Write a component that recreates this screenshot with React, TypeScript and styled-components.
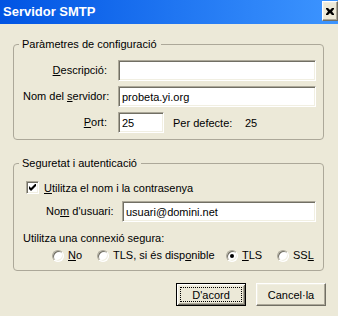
import React from "react";
import styled, { createGlobalStyle } from "styled-components";

const GlobalStyle = createGlobalStyle`
  html, body { margin: 0; padding: 0; background: #ECE9D8; }
  body {
    font-family: "Liberation Sans", Arial, sans-serif;
    font-size: 11px;
    color: #000;
  }
  * { box-sizing: border-box; }
`;

const Window = styled.div`
  width: 338px;
  height: 316px;
  display: flex;
  flex-direction: column;
  background: #ECE9D8;
  overflow: hidden;
`;

const TitleBar = styled.div`
  height: 24px;
  flex: none;
  display: flex;
  align-items: flex-start;
  justify-content: space-between;
  background: linear-gradient(to right, #0054E3, #3D95FF);
`;

const Title = styled.div`
  color: #fff;
  font-weight: bold;
  font-size: 13px;
  line-height: 24px;
  padding-left: 3px;
`;

const CloseButton = styled.div`
  width: 16px;
  height: 20px;
  margin-top: 1px;
  display: flex;
  align-items: center;
  justify-content: center;
  background: #ECE9D8;
  border: 1px solid;
  border-color: #fff #716F64 #716F64 #fff;
  box-shadow: inset -1px -1px #ACA899, inset 1px 1px #F1EFE2;
`;

const Body = styled.div`
  flex: 1;
  display: flex;
  flex-direction: column;
  padding: 20px 14px 0 13px;
`;

const Group = styled.div<{ $mt?: number; $pt: number; $pb: number }>`
  position: relative;
  margin-top: ${(p) => p.$mt ?? 0}px;
  border: 1px solid #ACA899;
  border-radius: 4px;
  padding: ${(p) => p.$pt}px 7px ${(p) => p.$pb}px 9px;
`;

const Legend = styled.span`
  position: absolute;
  top: -7px;
  left: 5px;
  padding: 0 4px 0 3px;
  line-height: 13px;
  background: #ECE9D8;
`;

const FieldGrid = styled.div`
  display: grid;
  grid-template-columns: 84px 1fr;
  column-gap: 11px;
  row-gap: 5px;
  align-items: center;
`;

const Label = styled.label<{ $align?: string }>`
  text-align: ${(p) => p.$align ?? "right"};
  white-space: nowrap;
  line-height: 13px;
`;

const TextBox = styled.input<{ $w?: number }>`
  width: ${(p) => (p.$w ? `${p.$w}px` : "100%")};
  height: 21px;
  margin: 0;
  padding: 0 0 0 3px;
  font-family: "Liberation Sans", Arial, sans-serif;
  font-size: 11px;
  color: #000;
  background: #fff;
  border: 1px solid;
  border-color: #ACA899 #fff #fff #ACA899;
  box-shadow: inset 1px 1px #716F64, inset -1px -1px #F1EFE2;
  outline: none;
`;

const PortRow = styled.div`
  display: flex;
  align-items: center;
`;

const DefaultLabel = styled.span`
  width: 72px;
  margin-left: 9px;
  white-space: nowrap;
`;

const CheckRow = styled.div`
  display: flex;
  align-items: center;
  gap: 5px;
  margin-left: 3px;
  height: 13px;
`;

const CheckBox = styled.span`
  width: 13px;
  height: 13px;
  flex: none;
  display: flex;
  align-items: center;
  justify-content: center;
  background: #fff;
  border: 1px solid;
  border-color: #ACA899 #fff #fff #ACA899;
  box-shadow: inset 1px 1px #716F64, inset -1px -1px #F1EFE2;
`;

const UserRow = styled.div`
  display: grid;
  grid-template-columns: 65px 1fr;
  column-gap: 11px;
  align-items: center;
  padding-left: 23px;
  margin-top: 7px;
`;

const PlainText = styled.div`
  line-height: 13px;
  margin-top: 10px;
  white-space: nowrap;
`;

const RadioRow = styled.div`
  display: flex;
  margin-top: 4px;
  padding-left: 29px;
  height: 13px;
`;

const RadioItem = styled.div<{ $w?: number }>`
  display: flex;
  align-items: center;
  gap: 4px;
  flex: none;
  width: ${(p) => (p.$w ? `${p.$w}px` : "auto")};
  white-space: nowrap;
  line-height: 13px;
`;

const RadioCircle = styled.span<{ $on?: boolean }>`
  width: 12px;
  height: 12px;
  flex: none;
  border-radius: 50%;
  background: #fff;
  border: 1px solid;
  border-color: #ACA899 #fff #fff #ACA899;
  box-shadow: inset 1px 1px #716F64, inset -1px -1px #F1EFE2;
  display: flex;
  align-items: center;
  justify-content: center;
  &::after {
    content: "";
    display: ${(p) => (p.$on ? "block" : "none")};
    width: 4px;
    height: 4px;
    border-radius: 50%;
    background: #000;
  }
`;

const ButtonRow = styled.div`
  display: flex;
  justify-content: flex-end;
  gap: 10px;
  margin-top: 12px;
  margin-right: -2px;
`;

const Button = styled.div<{ $default?: boolean }>`
  width: 70px;
  height: 23px;
  display: flex;
  align-items: center;
  justify-content: center;
  padding: 3px;
  background: #ECE9D8;
  border: 1px solid;
  border-color: ${(p) => (p.$default ? "#000" : "#fff #716F64 #716F64 #fff")};
  box-shadow: ${(p) =>
    p.$default
      ? "inset 1px 1px #fff, inset -1px -1px #716F64, inset 2px 2px #F1EFE2, inset -2px -2px #ACA899"
      : "inset -1px -1px #ACA899, inset 1px 1px #F1EFE2"};
`;

const FocusRect = styled.span<{ $show?: boolean }>`
  flex: 1;
  align-self: stretch;
  display: flex;
  align-items: center;
  justify-content: center;
  border: 1px ${(p) => (p.$show ? "dotted #000" : "solid transparent")};
`;

export default function App() {
  return (
    <>
      <GlobalStyle />
      <Window>
        <TitleBar>
          <Title>Servidor SMTP</Title>
          <CloseButton>
            <svg width="8" height="7" viewBox="0 0 8 7">
              <path d="M0 0h2l2 2 2-2h2v1L6 3.5 8 6v1H6L4 5 2 7H0V6l2-2.5L0 1z" fill="#000" />
            </svg>
          </CloseButton>
        </TitleBar>
        <Body>
          <Group $pt={15} $pb={6}>
            <Legend>Paràmetres de configuració</Legend>
            <FieldGrid>
              <Label>
                <u>D</u>escripció:
              </Label>
              <TextBox defaultValue="" />
              <Label>
                Nom del <u>s</u>ervidor:
              </Label>
              <TextBox defaultValue="probeta.yi.org" />
              <Label>
                <u>P</u>ort:
              </Label>
              <PortRow>
                <TextBox $w={46} defaultValue="25" />
                <DefaultLabel>Per defecte:</DefaultLabel>
                <span>25</span>
              </PortRow>
            </FieldGrid>
          </Group>
          <Group $mt={23} $pt={17} $pb={8}>
            <Legend>Seguretat i autenticació</Legend>
            <CheckRow>
              <CheckBox>
                <svg width="7" height="7" viewBox="0 0 7 7">
                  <path d="M0 2v3l2 2 5-5V-1L2 4z" fill="#000" />
                </svg>
              </CheckBox>
              <span>
                <u>U</u>tilitza el nom i la contrasenya
              </span>
            </CheckRow>
            <UserRow>
              <Label $align="left">
                No<u>m</u> d'usuari:
              </Label>
              <TextBox defaultValue="usuari@domini.net" />
            </UserRow>
            <PlainText>Utilitza una connexió segura:</PlainText>
            <RadioRow>
              <RadioItem $w={45}>
                <RadioCircle />
                <span>
                  <u>N</u>o
                </span>
              </RadioItem>
              <RadioItem $w={129}>
                <RadioCircle />
                <span>
                  TLS, si és disp<u>o</u>nible
                </span>
              </RadioItem>
              <RadioItem $w={51}>
                <RadioCircle $on />
                <span>
                  <u>T</u>LS
                </span>
              </RadioItem>
              <RadioItem>
                <RadioCircle />
                <span>
                  SS<u>L</u>
                </span>
              </RadioItem>
            </RadioRow>
          </Group>
          <ButtonRow>
            <Button $default>
              <FocusRect $show>D'acord</FocusRect>
            </Button>
            <Button>
              <FocusRect>Cancel·la</FocusRect>
            </Button>
          </ButtonRow>
        </Body>
      </Window>
    </>
  );
}
